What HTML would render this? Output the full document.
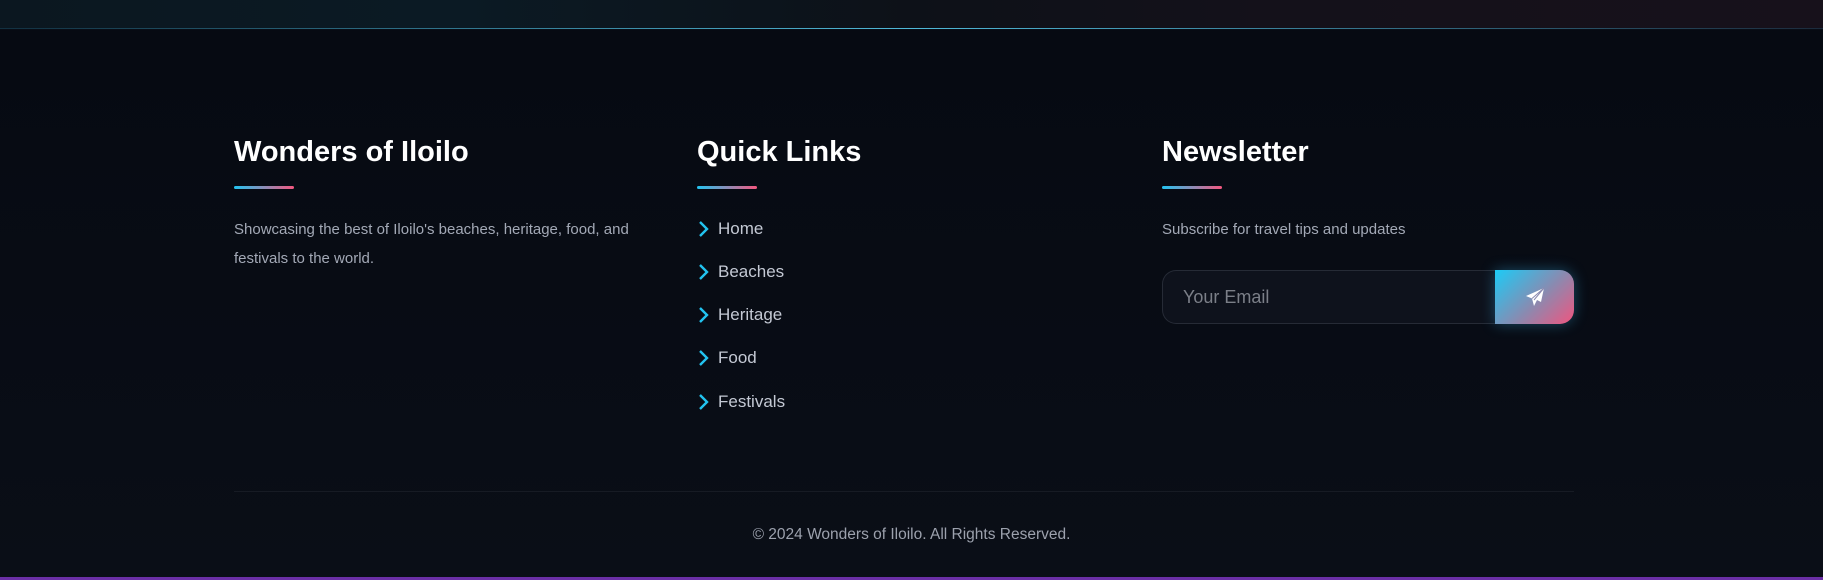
<!DOCTYPE html>
<html><head><meta charset="utf-8"><style>
*{margin:0;padding:0;box-sizing:border-box}
body{width:1823px;height:580px;overflow:hidden;background:#090d16;font-family:"Liberation Sans",sans-serif;position:relative}
.top{position:absolute;left:0;top:0;width:1823px;height:29px;background:linear-gradient(90deg,#0b1720 0%,#0b1a24 25%,#0d1118 50%,#14111a 70%,#17111b 100%)}
.top:after{content:"";position:absolute;left:0;right:0;bottom:0;height:1px;background:linear-gradient(90deg,rgba(56,189,248,.15),#4fb9d8 50%,rgba(56,189,248,.15))}
.main{position:absolute;left:0;top:30px;width:1823px;height:547px;background:linear-gradient(#060a12,#0a0e17)}
h3{position:absolute;color:#fff;font-size:29px;font-weight:bold;top:136px}
.ul{position:absolute;top:186px;width:60px;height:3px;border-radius:2px;background:linear-gradient(90deg,#22c3f0,#f4577f)}
.p{position:absolute;color:#a3a9b6;font-size:15px;line-height:29px;font-weight:300}
.lk{position:absolute;left:697px;color:#c4c9d4;font-size:17px}
.lk svg{position:absolute;left:0;top:1px}
.lk span{position:absolute;left:21px;top:0;white-space:nowrap}
.in{position:absolute;left:1162px;top:270px;width:333px;height:54px;border:1px solid #262b36;border-right:none;border-radius:14px 0 0 14px;background:#0e121c;color:#7b7f88;font-size:18px;padding:16px 0 0 20px}
.btn{position:absolute;left:1495px;top:270px;width:79px;height:54px;border-radius:0 14px 14px 0;background:linear-gradient(135deg,#1ccbf6,#8a8ab0 55%,#f0557f);box-shadow:0 0 14px rgba(56,189,248,.35)}
.hr{position:absolute;left:234px;top:491px;width:1340px;height:1px;background:#171b24}
.cp{position:absolute;left:0;width:1823px;top:526px;text-align:center;color:#9ca1ad;font-size:15.5px;font-weight:300}
.bot{position:absolute;left:0;bottom:0;width:1823px;height:3px;background:#6b2fa6}
</style></head><body>
<div class="top"></div>
<div class="main"></div>
<h3 style="left:234px">Wonders of Iloilo</h3>
<div class="ul" style="left:234px"></div>
<div class="p" style="left:234px;top:215px;width:440px">Showcasing the best of Iloilo's beaches, heritage, food, and festivals to the world.</div>
<h3 style="left:697px">Quick Links</h3>
<div class="ul" style="left:697px"></div>
<div class="lk" style="top:219px"><svg width="12" height="18" viewBox="0 0 12 18"><path d="M3 2l7 7-7 7" stroke="#22c3f0" stroke-width="2.4" fill="none"/></svg><span>Home</span></div>
<div class="lk" style="top:262px"><svg width="12" height="18" viewBox="0 0 12 18"><path d="M3 2l7 7-7 7" stroke="#22c3f0" stroke-width="2.4" fill="none"/></svg><span>Beaches</span></div>
<div class="lk" style="top:305px"><svg width="12" height="18" viewBox="0 0 12 18"><path d="M3 2l7 7-7 7" stroke="#22c3f0" stroke-width="2.4" fill="none"/></svg><span>Heritage</span></div>
<div class="lk" style="top:348px"><svg width="12" height="18" viewBox="0 0 12 18"><path d="M3 2l7 7-7 7" stroke="#22c3f0" stroke-width="2.4" fill="none"/></svg><span>Food</span></div>
<div class="lk" style="top:392px"><svg width="12" height="18" viewBox="0 0 12 18"><path d="M3 2l7 7-7 7" stroke="#22c3f0" stroke-width="2.4" fill="none"/></svg><span>Festivals</span></div>
<h3 style="left:1162px">Newsletter</h3>
<div class="ul" style="left:1162px"></div>
<div class="p" style="left:1162px;top:215px">Subscribe for travel tips and updates</div>
<div class="in">Your Email</div>
<div class="btn"><svg width="20" height="20" viewBox="0 0 20 20" style="position:absolute;left:30px;top:17px"><path d="M19 1L1 9l6 2.5L9 19l3-6 4 2z" fill="#fff"/><path d="M7 11.5L19 1 9 13" stroke="#8a8ab0" stroke-width="1" fill="none"/></svg></div>
<div class="hr"></div>
<div class="cp">© 2024 Wonders of Iloilo. All Rights Reserved.</div>
<div class="bot"></div>
</body></html>
